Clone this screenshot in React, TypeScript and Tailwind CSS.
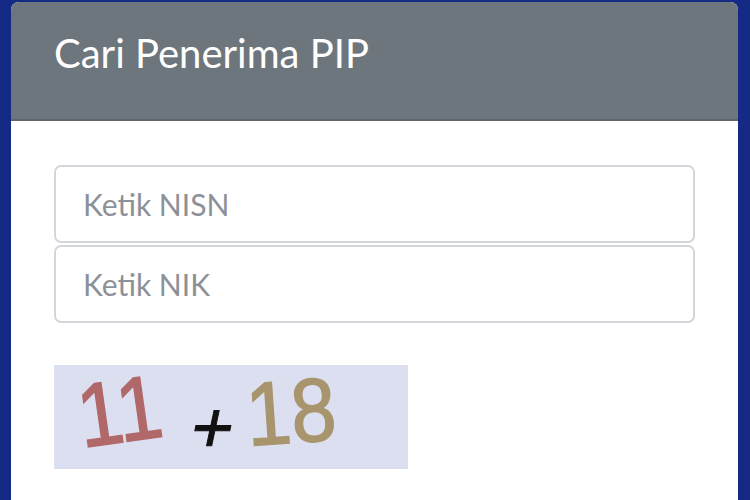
export default function App() {
  return (
    <div className="h-[500px] w-[750px] overflow-hidden bg-[#142a85] pt-[2px] pl-[11px] pr-[12px]" style={{ fontFamily: 'Lato, "Open Sans", sans-serif' }}>
      <div className="h-[520px] rounded-t-[8px] bg-white overflow-hidden">
        <div className="flex h-[119px] items-start border-b-2 border-[#5f666c] bg-[#6d757d] px-[43px] pt-[27px]">
          <h1 className="text-[40px] leading-[48px] font-normal text-white">Cari Penerima PIP</h1>
        </div>
        <div className="px-[43px] pt-[44px]">
          <div className="flex flex-col gap-[2px]">
            <input
              placeholder="Ketik NISN"
              className="h-[78px] w-full rounded-[7px] border-2 border-[#d3d7db] bg-white px-[27px] text-[30px] text-[#495057] outline-none placeholder:text-[#8c9197]"
            />
            <input
              placeholder="Ketik NIK"
              className="h-[78px] w-full rounded-[7px] border-2 border-[#d3d7db] bg-white px-[27px] text-[30px] text-[#495057] outline-none placeholder:text-[#8c9197]"
            />
          </div>
          <div className="mt-[42px] flex h-[104px] w-[354px] items-start bg-[#dcdff0] pl-[24px]" style={{ fontFamily: '"Liberation Sans", Arial, sans-serif' }}>
            <span className="inline-block w-[84px] origin-left -rotate-[8deg] scale-x-90 text-[90px] leading-[104px] text-[#b06868] [-webkit-text-stroke:1.5px_#b06868]">11</span>
            <span className="ml-[30px] mt-[10px] inline-block w-[48px] -skew-x-[12deg] text-[72px] leading-[104px] text-[#111] [-webkit-text-stroke:1px_#111]">+</span>
            <span className="ml-[6px] inline-block origin-left -rotate-[4deg] scale-x-90 text-[90px] leading-[100px] text-[#a8956e] [-webkit-text-stroke:1.5px_#a8956e]">18</span>
          </div>
        </div>
      </div>
    </div>
  );
}
